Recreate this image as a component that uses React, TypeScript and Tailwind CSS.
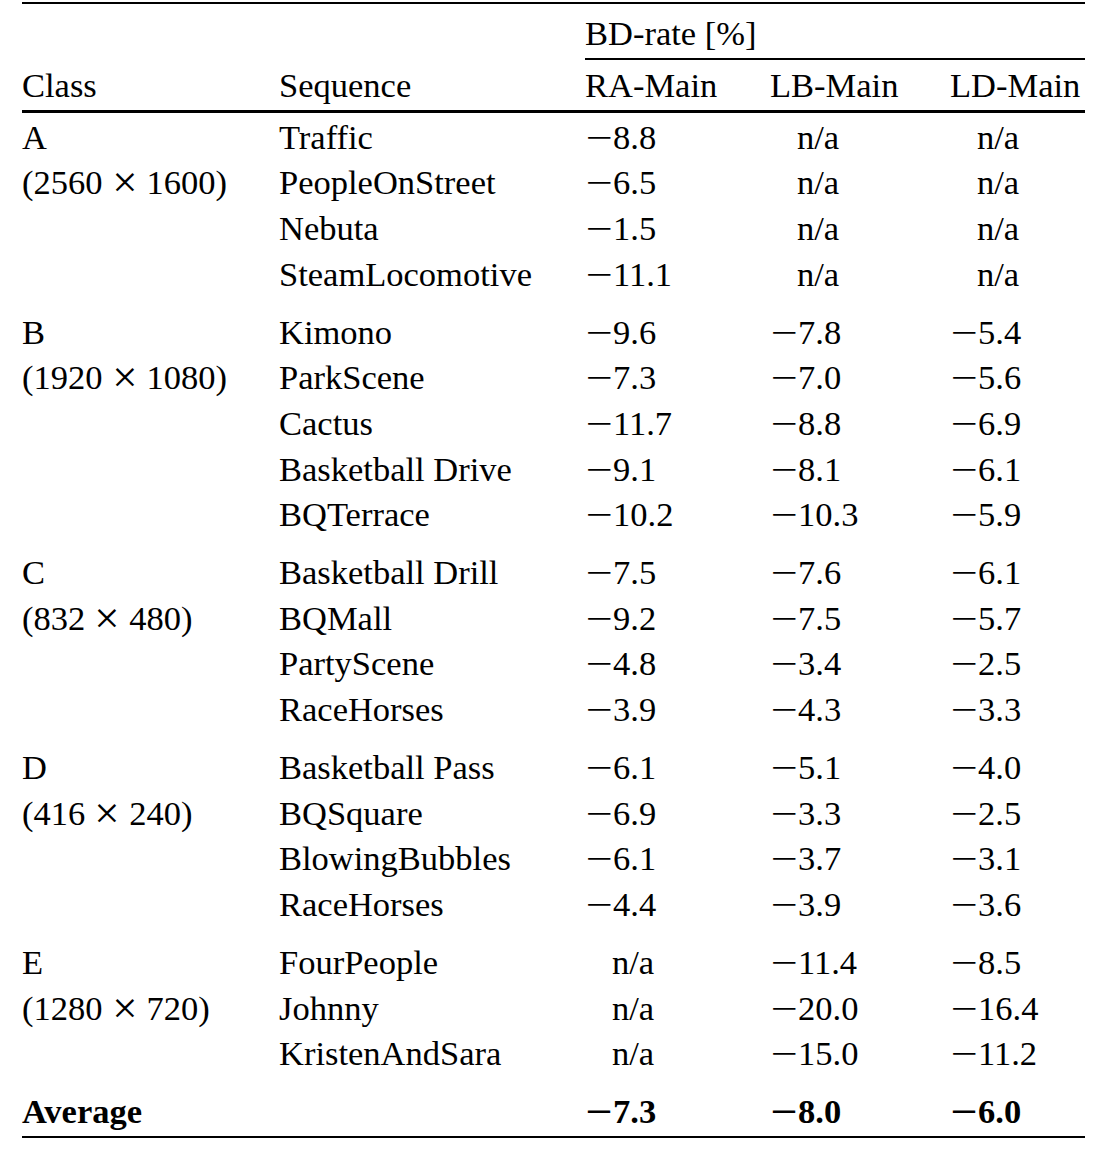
import React from "react";

type Row = { seq: string; ra: string; lb: string; ld: string };
type Group = { cls: string; res: string; rows: Row[] };

const groups: Group[] = [
  {
    cls: "A",
    res: "(2560 × 1600)",
    rows: [
      { seq: "Traffic", ra: "-8.8", lb: "n/a", ld: "n/a" },
      { seq: "PeopleOnStreet", ra: "-6.5", lb: "n/a", ld: "n/a" },
      { seq: "Nebuta", ra: "-1.5", lb: "n/a", ld: "n/a" },
      { seq: "SteamLocomotive", ra: "-11.1", lb: "n/a", ld: "n/a" },
    ],
  },
  {
    cls: "B",
    res: "(1920 × 1080)",
    rows: [
      { seq: "Kimono", ra: "-9.6", lb: "-7.8", ld: "-5.4" },
      { seq: "ParkScene", ra: "-7.3", lb: "-7.0", ld: "-5.6" },
      { seq: "Cactus", ra: "-11.7", lb: "-8.8", ld: "-6.9" },
      { seq: "Basketball Drive", ra: "-9.1", lb: "-8.1", ld: "-6.1" },
      { seq: "BQTerrace", ra: "-10.2", lb: "-10.3", ld: "-5.9" },
    ],
  },
  {
    cls: "C",
    res: "(832 × 480)",
    rows: [
      { seq: "Basketball Drill", ra: "-7.5", lb: "-7.6", ld: "-6.1" },
      { seq: "BQMall", ra: "-9.2", lb: "-7.5", ld: "-5.7" },
      { seq: "PartyScene", ra: "-4.8", lb: "-3.4", ld: "-2.5" },
      { seq: "RaceHorses", ra: "-3.9", lb: "-4.3", ld: "-3.3" },
    ],
  },
  {
    cls: "D",
    res: "(416 × 240)",
    rows: [
      { seq: "Basketball Pass", ra: "-6.1", lb: "-5.1", ld: "-4.0" },
      { seq: "BQSquare", ra: "-6.9", lb: "-3.3", ld: "-2.5" },
      { seq: "BlowingBubbles", ra: "-6.1", lb: "-3.7", ld: "-3.1" },
      { seq: "RaceHorses", ra: "-4.4", lb: "-3.9", ld: "-3.6" },
    ],
  },
  {
    cls: "E",
    res: "(1280 × 720)",
    rows: [
      { seq: "FourPeople", ra: "n/a", lb: "-11.4", ld: "-8.5" },
      { seq: "Johnny", ra: "n/a", lb: "-20.0", ld: "-16.4" },
      { seq: "KristenAndSara", ra: "n/a", lb: "-15.0", ld: "-11.2" },
    ],
  },
];

const cols = "grid grid-cols-[257px_306px_185px_180px_135px]";
const rowH = "h-[45.67px] leading-[45.67px] whitespace-nowrap";

function Val({ v }: { v: string }) {
  if (v === "n/a") return <div className="pl-[27px]">n/a</div>;
  return (
    <div>
      <span className="inline-block w-[28px] text-center scale-x-[1.39]">−</span>
      {v.slice(1)}
    </div>
  );
}

function Res({ text }: { text: string }) {
  const [a, b] = text.split(" × ");
  return (
    <span>
      {a}
      <span className="inline-block w-[44px] text-center scale-[1.3]">×</span>
      {b}
    </span>
  );
}

export default function App() {
  return (
    <div className="min-h-screen bg-white text-black font-['Liberation_Serif',serif] text-[34.5px]">
      <div className="ml-[22px] w-[1063px] pt-[2px]">
        {/* top rule */}
        <div className="h-[2px] bg-black" />

        {/* header */}
        <div className={`${cols} mt-[6.5px] ${rowH}`}>
          <div />
          <div />
          <div className="col-span-3">BD-rate [%]</div>
        </div>
        <div className={`${cols} mt-[1.8px]`}>
          <div />
          <div />
          <div className="col-span-3 h-[2px] bg-black" />
        </div>
        <div className={`${cols} mt-[3px] ${rowH}`}>
          <div>Class</div>
          <div>Sequence</div>
          <div>RA-Main</div>
          <div>LB-Main</div>
          <div>LD-Main</div>
        </div>
        <div className="mt-[1px] h-[3.5px] bg-black" />

        {/* body */}
        <div className="pt-[1.5px]">
          {groups.map((g, gi) => (
            <div key={g.cls} className={gi > 0 ? "mt-[12.3px]" : ""}>
              {g.rows.map((r, ri) => (
                <div key={r.seq + ri} className={`${cols} ${rowH}`}>
                  <div>{ri === 0 ? g.cls : ri === 1 ? <Res text={g.res} /> : ""}</div>
                  <div>{r.seq}</div>
                  <Val v={r.ra} />
                  <Val v={r.lb} />
                  <Val v={r.ld} />
                </div>
              ))}
            </div>
          ))}

          {/* average */}
          <div className={`${cols} ${rowH} mt-[12.3px] font-bold`}>
            <div>Average</div>
            <div />
            <Val v="-7.3" />
            <Val v="-8.0" />
            <Val v="-6.0" />
          </div>
        </div>
        <div className="mt-[1px] h-[2.5px] bg-black" />
      </div>
    </div>
  );
}
